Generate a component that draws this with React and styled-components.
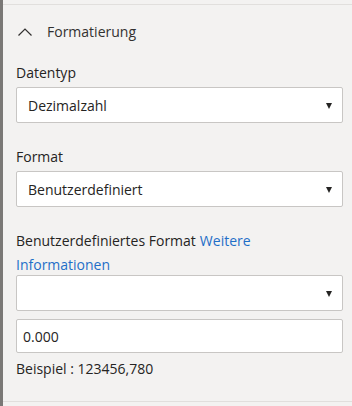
import React from 'react';
import styled, { createGlobalStyle } from 'styled-components';

const GlobalStyle = createGlobalStyle`
  html, body {
    margin: 0;
    padding: 0;
    background: #f3f2f1;
  }
  body {
    font-family: 'Open Sans', 'Noto Sans', sans-serif;
    color: #252423;
  }
`;

const Pane = styled.div`
  width: 352px;
  height: 406px;
  display: flex;
  background: #f3f2f1;
  box-sizing: border-box;
`;

const Edge = styled.div`
  width: 3px;
  flex: none;
  background: #7a7876;
`;

const Body = styled.div`
  flex: 1;
  display: flex;
  flex-direction: column;
  padding-top: 4px;
`;

const Card = styled.section`
  flex: 1;
  border-top: 1px solid #e1dfdd;
  border-bottom: 1px solid #e1dfdd;
  padding: 0 9px 0 13px;
  margin-bottom: 4px;
`;

const Header = styled.div`
  display: flex;
  align-items: center;
  height: 53px;
  gap: 14px;
  font-size: 14px;
  color: #323130;
  padding-left: 1px;
`;

const Field = styled.div`
  display: flex;
  flex-direction: column;
  margin-bottom: ${p => p.$gap || 0}px;
`;

const Label = styled.div`
  font-size: 14px;
  line-height: ${p => p.$lh || 20}px;
  margin: ${p => (p.$lh ? '3px 0 -2px' : '5px 0 4px')};
  color: #252423;
`;

const Link = styled.a`
  color: #1f6fc8;
  text-decoration: none;
  margin-left: 4px;
`;

const Select = styled.div`
  height: 36px;
  box-sizing: border-box;
  background: #fff;
  border: 1px solid #c8c6c4;
  border-radius: 2px;
  display: flex;
  align-items: center;
  justify-content: space-between;
  padding: 0 10px 0 11px;
  font-size: 14px;
  color: #252423;
`;

const Arrow = styled.span`
  width: 0;
  height: 0;
  border-left: 3.5px solid transparent;
  border-right: 3.5px solid transparent;
  border-top: 6px solid #252423;
  margin-top: 1px;
`;

const Input = styled.div`
  height: 34px;
  box-sizing: border-box;
  background: #fff;
  border: 1px solid #c8c6c4;
  border-radius: 2px;
  display: flex;
  align-items: center;
  padding: 0 6px;
  font-size: 14px;
  margin-top: 8px;
`;

const Hint = styled.div`
  font-size: 14px;
  line-height: 20px;
  margin-top: 6px;
  color: #252423;
`;

const Chevron = () => (
  <svg width="16" height="10" viewBox="0 0 16 10">
    <path d="M1.5 8.5 L8 2 L14.5 8.5" fill="none" stroke="#323130" strokeWidth="1.2" />
  </svg>
);

const Dropdown = ({ value }) => (
  <Select>
    <span>{value}</span>
    <Arrow />
  </Select>
);

export default function App() {
  return (
    <>
      <GlobalStyle />
      <Pane>
        <Edge />
        <Body>
          <Card>
            <Header>
              <Chevron />
              <span>Formatierung</span>
            </Header>
            <Field $gap={19}>
              <Label>Datentyp</Label>
              <Dropdown value="Dezimalzahl" />
            </Field>
            <Field $gap={19}>
              <Label>Format</Label>
              <Dropdown value="Benutzerdefiniert" />
            </Field>
            <Field>
              <Label $lh={24}>
                Benutzerdefiniertes Format
                <Link href="#">Weitere Informationen</Link>
              </Label>
              <Dropdown value="" />
              <Input>0.000</Input>
              <Hint>Beispiel : 123456,780</Hint>
            </Field>
          </Card>
        </Body>
      </Pane>
    </>
  );
}
